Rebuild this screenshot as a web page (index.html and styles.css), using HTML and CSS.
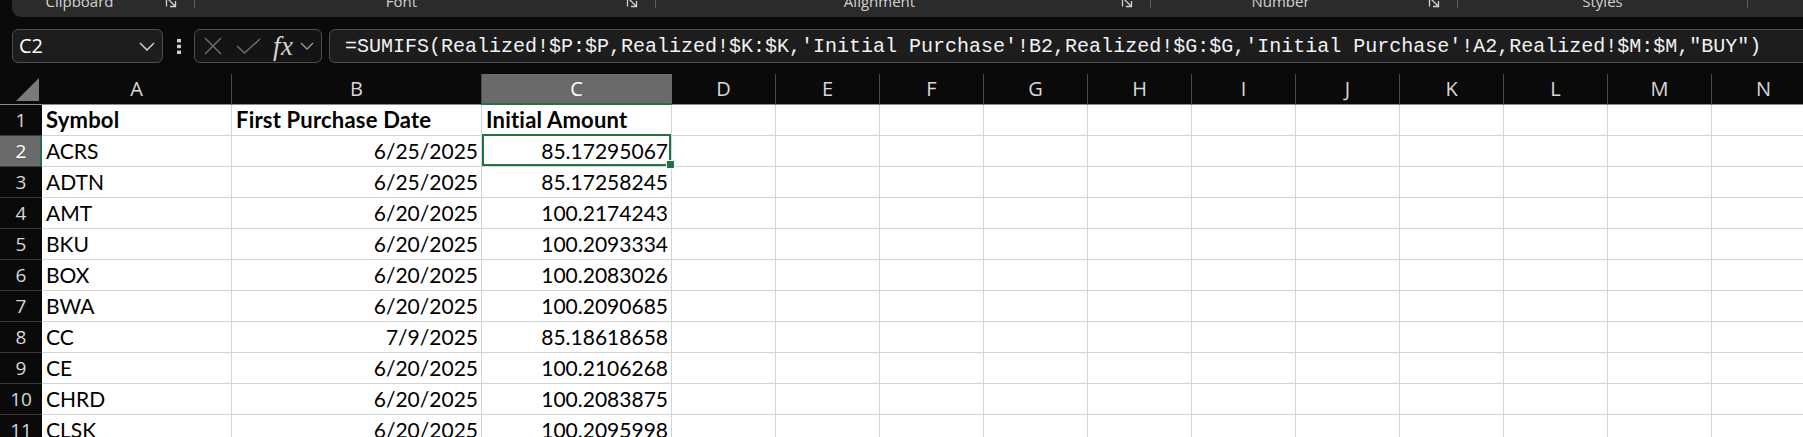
FILE: index.html
```html
<!DOCTYPE html>
<html>
<head>
<meta charset="utf-8">
<link rel="stylesheet" href="styles.css">
</head>
<body>
<div class="ribbon">
  <div class="grp w-clip"><span class="lbl">Clipboard</span><svg class="launch" viewBox="0 0 12 12"><path d="M1.5 0V10.5M3 3L10 10M5 10.5H10.5V5"/></svg></div>
  <span class="sep"></span>
  <div class="grp w-font"><span class="lbl">Font</span><svg class="launch" viewBox="0 0 12 12"><path d="M1.5 0V10.5M3 3L10 10M5 10.5H10.5V5"/></svg></div>
  <span class="sep"></span>
  <div class="grp w-align"><span class="lbl">Alignment</span><svg class="launch" viewBox="0 0 12 12"><path d="M1.5 0V10.5M3 3L10 10M5 10.5H10.5V5"/></svg></div>
  <span class="sep"></span>
  <div class="grp w-num"><span class="lbl">Number</span><svg class="launch" viewBox="0 0 12 12"><path d="M1.5 0V10.5M3 3L10 10M5 10.5H10.5V5"/></svg></div>
  <span class="sep"></span>
  <div class="grp-plain w-styles"><span class="lbl">Styles</span></div>
  <span class="sep"></span>
</div>

<div class="fbar">
  <div class="namebox"><span class="nb-text">C2</span><svg class="chev" viewBox="0 0 16 9"><polyline points="1,1 8,8 15,1"/></svg></div>
  <svg class="dots" viewBox="0 0 4 15"><rect x="0" y="0" width="4" height="3.4"/><rect x="0" y="5.8" width="4" height="3.4"/><rect x="0" y="11.6" width="4" height="3.4"/></svg>
  <div class="fxbox">
    <svg class="ic-x" viewBox="0 0 18 18"><path d="M1 1L17 17M17 1L1 17"/></svg>
    <svg class="ic-ok" viewBox="0 0 25 16"><polyline points="1,8 8.5,15 24,1"/></svg>
    <span class="fx">fx</span>
    <svg class="chev2" viewBox="0 0 14 8"><polyline points="1,1 7,7 13,1"/></svg>
  </div>
  <div class="formula">=SUMIFS(Realized!$P:$P,Realized!$K:$K,'Initial Purchase'!B2,Realized!$G:$G,'Initial Purchase'!A2,Realized!$M:$M,"BUY")</div>
</div>

<div class="sheet">
  <div class="corner"><svg class="tri" viewBox="0 0 23 23"><polygon points="23,0 23,23 0,23"/></svg></div>
  <div class="ch">A</div><div class="ch">B</div><div class="ch sel">C</div><div class="ch">D</div><div class="ch">E</div><div class="ch">F</div><div class="ch">G</div><div class="ch">H</div><div class="ch">I</div><div class="ch">J</div><div class="ch">K</div><div class="ch">L</div><div class="ch">M</div><div class="ch">N</div>

  <div class="rh">1</div><div class="c b">Symbol</div><div class="c b">First Purchase Date</div><div class="c b">Initial Amount</div><div class="c"></div><div class="c"></div><div class="c"></div><div class="c"></div><div class="c"></div><div class="c"></div><div class="c"></div><div class="c"></div><div class="c"></div><div class="c"></div><div class="c"></div>

  <div class="rh sel">2</div><div class="c">ACRS</div><div class="c r">6/25/2025</div><div class="c r act">85.17295067</div><div class="c"></div><div class="c"></div><div class="c"></div><div class="c"></div><div class="c"></div><div class="c"></div><div class="c"></div><div class="c"></div><div class="c"></div><div class="c"></div><div class="c"></div>

  <div class="rh">3</div><div class="c">ADTN</div><div class="c r">6/25/2025</div><div class="c r">85.17258245</div><div class="c"></div><div class="c"></div><div class="c"></div><div class="c"></div><div class="c"></div><div class="c"></div><div class="c"></div><div class="c"></div><div class="c"></div><div class="c"></div><div class="c"></div>

  <div class="rh">4</div><div class="c">AMT</div><div class="c r">6/20/2025</div><div class="c r">100.2174243</div><div class="c"></div><div class="c"></div><div class="c"></div><div class="c"></div><div class="c"></div><div class="c"></div><div class="c"></div><div class="c"></div><div class="c"></div><div class="c"></div><div class="c"></div>

  <div class="rh">5</div><div class="c">BKU</div><div class="c r">6/20/2025</div><div class="c r">100.2093334</div><div class="c"></div><div class="c"></div><div class="c"></div><div class="c"></div><div class="c"></div><div class="c"></div><div class="c"></div><div class="c"></div><div class="c"></div><div class="c"></div><div class="c"></div>

  <div class="rh">6</div><div class="c">BOX</div><div class="c r">6/20/2025</div><div class="c r">100.2083026</div><div class="c"></div><div class="c"></div><div class="c"></div><div class="c"></div><div class="c"></div><div class="c"></div><div class="c"></div><div class="c"></div><div class="c"></div><div class="c"></div><div class="c"></div>

  <div class="rh">7</div><div class="c">BWA</div><div class="c r">6/20/2025</div><div class="c r">100.2090685</div><div class="c"></div><div class="c"></div><div class="c"></div><div class="c"></div><div class="c"></div><div class="c"></div><div class="c"></div><div class="c"></div><div class="c"></div><div class="c"></div><div class="c"></div>

  <div class="rh">8</div><div class="c">CC</div><div class="c r">7/9/2025</div><div class="c r">85.18618658</div><div class="c"></div><div class="c"></div><div class="c"></div><div class="c"></div><div class="c"></div><div class="c"></div><div class="c"></div><div class="c"></div><div class="c"></div><div class="c"></div><div class="c"></div>

  <div class="rh">9</div><div class="c">CE</div><div class="c r">6/20/2025</div><div class="c r">100.2106268</div><div class="c"></div><div class="c"></div><div class="c"></div><div class="c"></div><div class="c"></div><div class="c"></div><div class="c"></div><div class="c"></div><div class="c"></div><div class="c"></div><div class="c"></div>

  <div class="rh">10</div><div class="c">CHRD</div><div class="c r">6/20/2025</div><div class="c r">100.2083875</div><div class="c"></div><div class="c"></div><div class="c"></div><div class="c"></div><div class="c"></div><div class="c"></div><div class="c"></div><div class="c"></div><div class="c"></div><div class="c"></div><div class="c"></div>

  <div class="rh">11</div><div class="c">CLSK</div><div class="c r">6/20/2025</div><div class="c r">100.2095998</div><div class="c"></div><div class="c"></div><div class="c"></div><div class="c"></div><div class="c"></div><div class="c"></div><div class="c"></div><div class="c"></div><div class="c"></div><div class="c"></div><div class="c"></div>
</div>
</body>
</html>
```

FILE: styles.css
```css
* { box-sizing: border-box; margin: 0; padding: 0; }
html, body { background: #0a0a0a; }
body { width: 1803px; height: 437px; overflow: hidden; }

/* ribbon strip (bottom of group labels) */
.ribbon {
  display: flex;
  height: 17px;
  margin-left: 12px;
  width: 1810px;
  background: #2b2b2b;
  border-radius: 0 0 0 9px;
  overflow: hidden;
}
.grp {
  display: grid;
  grid-template-columns: 1fr 12px;
  column-gap: 18px;
  padding-right: 17px;
  align-items: start;
}
.grp-plain { display: flex; justify-content: center; align-items: flex-start; }
.w-clip { width: 182px; }
.w-font { width: 460px; }
.w-align { width: 494px; }
.w-num { width: 306px; }
.w-styles { width: 289px; }
.lbl {
  font-family: "Open Sans", sans-serif;
  font-size: 15px;
  line-height: 14px;
  margin-top: -6px;
  color: #d2d2d2;
  text-align: center;
  white-space: nowrap;
}
.launch {
  width: 12px; height: 12px;
  margin-top: -4px;
  fill: none; stroke: #d2d2d2; stroke-width: 1.3;
}
.sep { width: 1px; height: 8px; background: #5c5c5c; flex: none; }

/* formula bar */
.fbar {
  display: flex;
  align-items: center;
  height: 34px;
  margin-top: 12px;
}
.namebox {
  flex: none;
  width: 151px; height: 34px;
  margin-left: 12px;
  border: 1px solid #4e4e4e;
  border-radius: 6px;
  background: #1d1d1d;
  display: flex;
  align-items: center;
  justify-content: space-between;
  padding: 0 7px 0 6px;
}
.nb-text {
  font-family: "Open Sans", sans-serif;
  font-size: 20px;
  line-height: 32px;
  color: #ffffff;
}
.chev { width: 16px; height: 9px; fill: none; stroke: #d0d0d0; stroke-width: 1.5; }
.dots { flex: none; width: 4px; height: 15px; margin-left: 14px; fill: #cfcfcf; }
.fxbox {
  flex: none;
  width: 128px; height: 34px;
  margin-left: 13px;
  border: 1px solid #4e4e4e;
  border-radius: 6px;
  background: #141414;
  display: flex;
  align-items: center;
  padding-left: 9px;
}
.ic-x { width: 18px; height: 18px; fill: none; stroke: #6c6c6c; stroke-width: 1.5; }
.ic-ok { width: 25px; height: 16px; margin-left: 14px; fill: none; stroke: #6c6c6c; stroke-width: 1.5; }
.fx {
  font-family: "Liberation Serif", serif;
  font-style: italic;
  font-size: 27px;
  line-height: 30px;
  color: #d4d4d4;
  margin-left: 12px;
  letter-spacing: 0.5px;
}
.chev2 { width: 14px; height: 8px; margin-left: 6px; fill: none; stroke: #9a9a9a; stroke-width: 1.4; }
.formula {
  flex: none;
  width: 1500px; height: 34px;
  margin-left: 7px;
  border: 1px solid #4e4e4e;
  border-radius: 6px;
  background: #1d1d1d;
  padding: 1px 0 0 15px;
  font-family: "Liberation Mono", monospace;
  font-size: 20px;
  line-height: 32px;
  color: #f2f2f2;
  white-space: nowrap;
  overflow: hidden;
}

/* sheet grid */
.sheet {
  display: grid;
  grid-template-columns: 42px 190px 250px 190px repeat(11, 104px);
  grid-auto-rows: 31px;
  margin-top: 11px;
}
.corner {
  background: #0a0a0a;
  border-bottom: 1px solid #8c8c8c;
  padding: 4px 0 0 16px;
}
.tri { display: block; width: 23px; height: 23px; fill: #7a7a7a; }
.ch {
  background: #0a0a0a;
  color: #d8d8d8;
  font-family: "Open Sans", sans-serif;
  font-size: 20px;
  line-height: 30px;
  text-align: center;
  border-right: 1px solid #4a4a4a;
  border-bottom: 1px solid #8c8c8c;
}
.ch.sel {
  background: #6a6a6a;
  color: #ffffff;
  border-right-color: #6a6a6a;
  border-bottom: 2px solid #217346;
  line-height: 29px;
}
.rh {
  background: #0a0a0a;
  color: #d8d8d8;
  font-family: "Open Sans", sans-serif;
  font-size: 19px;
  line-height: 30px;
  text-align: center;
  border-bottom: 1px solid #3a3a3a;
}
.rh.sel {
  background: #6a6a6a;
  color: #ffffff;
  border-right: 2px solid #217346;
  padding-left: 2px;
}
.c {
  background: #ffffff;
  border-right: 1px solid #d4d4d4;
  border-bottom: 1px solid #d4d4d4;
  font-family: Lato, "Open Sans", sans-serif;
  font-size: 21px;
  line-height: 30px;
  color: #000000;
  padding: 0 3px 0 4px;
  white-space: nowrap;
}
.c.b { font-weight: 700; font-size: 22px; letter-spacing: 0.2px; }
.c.r { text-align: right; }
.act { position: relative; }
.act::after {
  content: "";
  position: absolute;
  top: -2px; left: 0; right: 0; bottom: 0;
  border: 2px solid #217346;
}
.act::before {
  content: "";
  position: absolute;
  right: -4px; bottom: -3px;
  width: 7px; height: 7px;
  background: #217346;
  border: 1px solid #ffffff;
  z-index: 2;
}
```
